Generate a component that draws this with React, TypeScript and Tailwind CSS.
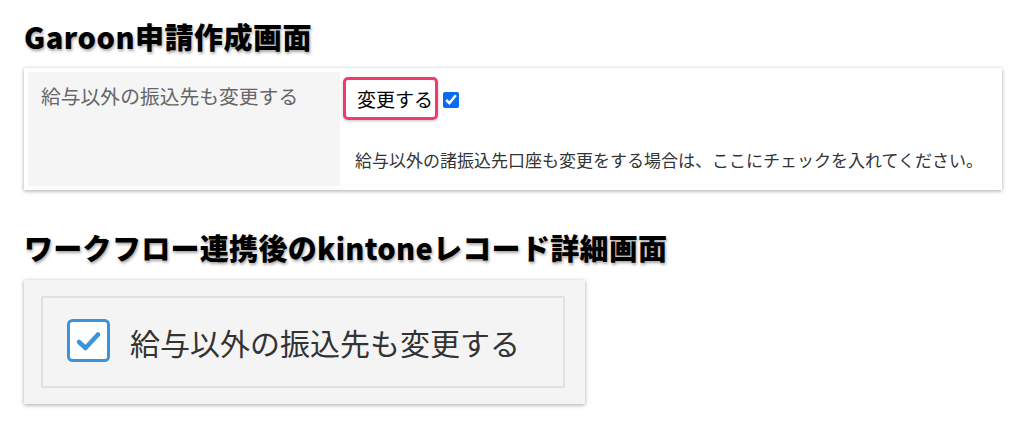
export default function App() {
  const font = { fontFamily: '"Noto Sans CJK JP", "Noto Sans", sans-serif' };

  return (
    <div className="min-h-screen bg-white pl-[24px] pt-[16px]" style={font}>
      <h1 className="text-[29px] leading-[40px] font-black text-black tracking-[0.5px] [text-shadow:1px_2px_3px_rgba(0,0,0,0.35)]">
        Garoon申請作成画面
      </h1>

      <div className="mt-[12px] w-[978px] h-[122px] bg-white p-[4px] flex shadow-[0_1px_4px_rgba(0,0,0,0.35)]">
        <div className="w-[312px] bg-[#f5f5f5] pl-[13px] pt-[10px]">
          <p className="text-[19.8px] leading-[28px] text-[#666]">給与以外の振込先も変更する</p>
        </div>
        <div className="flex-1 flex flex-col pl-[3px] pt-[5px]">
          <div className="flex items-center">
            <div className="h-[43px] w-[95px] border-[3px] border-[#f23a6c] rounded-[5px] flex items-center pl-[11px] shadow-[0_1px_3px_rgba(0,0,0,0.25)]">
              <span className="text-[19px] leading-[26px] text-black">変更する</span>
            </div>
            <input
              type="checkbox"
              checked
              readOnly
              className="ml-[5px] mt-[2px] w-[16px] h-[16px] accent-[#0a6cf0]"
            />
          </div>
          <p className="mt-[28px] ml-[12px] text-[17px] leading-[24px] text-[#333]">
            給与以外の諸振込先口座も変更をする場合は、ここにチェックを入れてください。
          </p>
        </div>
      </div>

      <h2 className="mt-[37px] text-[29px] leading-[40px] font-black text-black tracking-[0.3px] [text-shadow:1px_2px_3px_rgba(0,0,0,0.35)]">
        ワークフロー連携後のkintoneレコード詳細画面
      </h2>

      <div className="mt-[13px] w-[561px] h-[124px] bg-[#f4f4f4] pt-[16px] pl-[17px] shadow-[0_1px_4px_rgba(0,0,0,0.35)]">
        <div className="w-[524px] h-[92px] border-2 border-[#dde2e5] flex items-center pl-[24px]">
          <svg width="43" height="43" viewBox="0 0 43 43" className="shrink-0 -mt-[4px]">
            <rect x="1.5" y="1.5" width="40" height="40" rx="4" fill="#fff" stroke="#3a94dc" strokeWidth="3" />
            <path d="M12 23 L18.5 29 L31 15.5" fill="none" stroke="#3a94dc" strokeWidth="4.5" strokeLinecap="round" strokeLinejoin="round" />
          </svg>
          <span className="ml-[20px] text-[30px] leading-[40px] text-[#333]">給与以外の振込先も変更する</span>
        </div>
      </div>
    </div>
  );
}
